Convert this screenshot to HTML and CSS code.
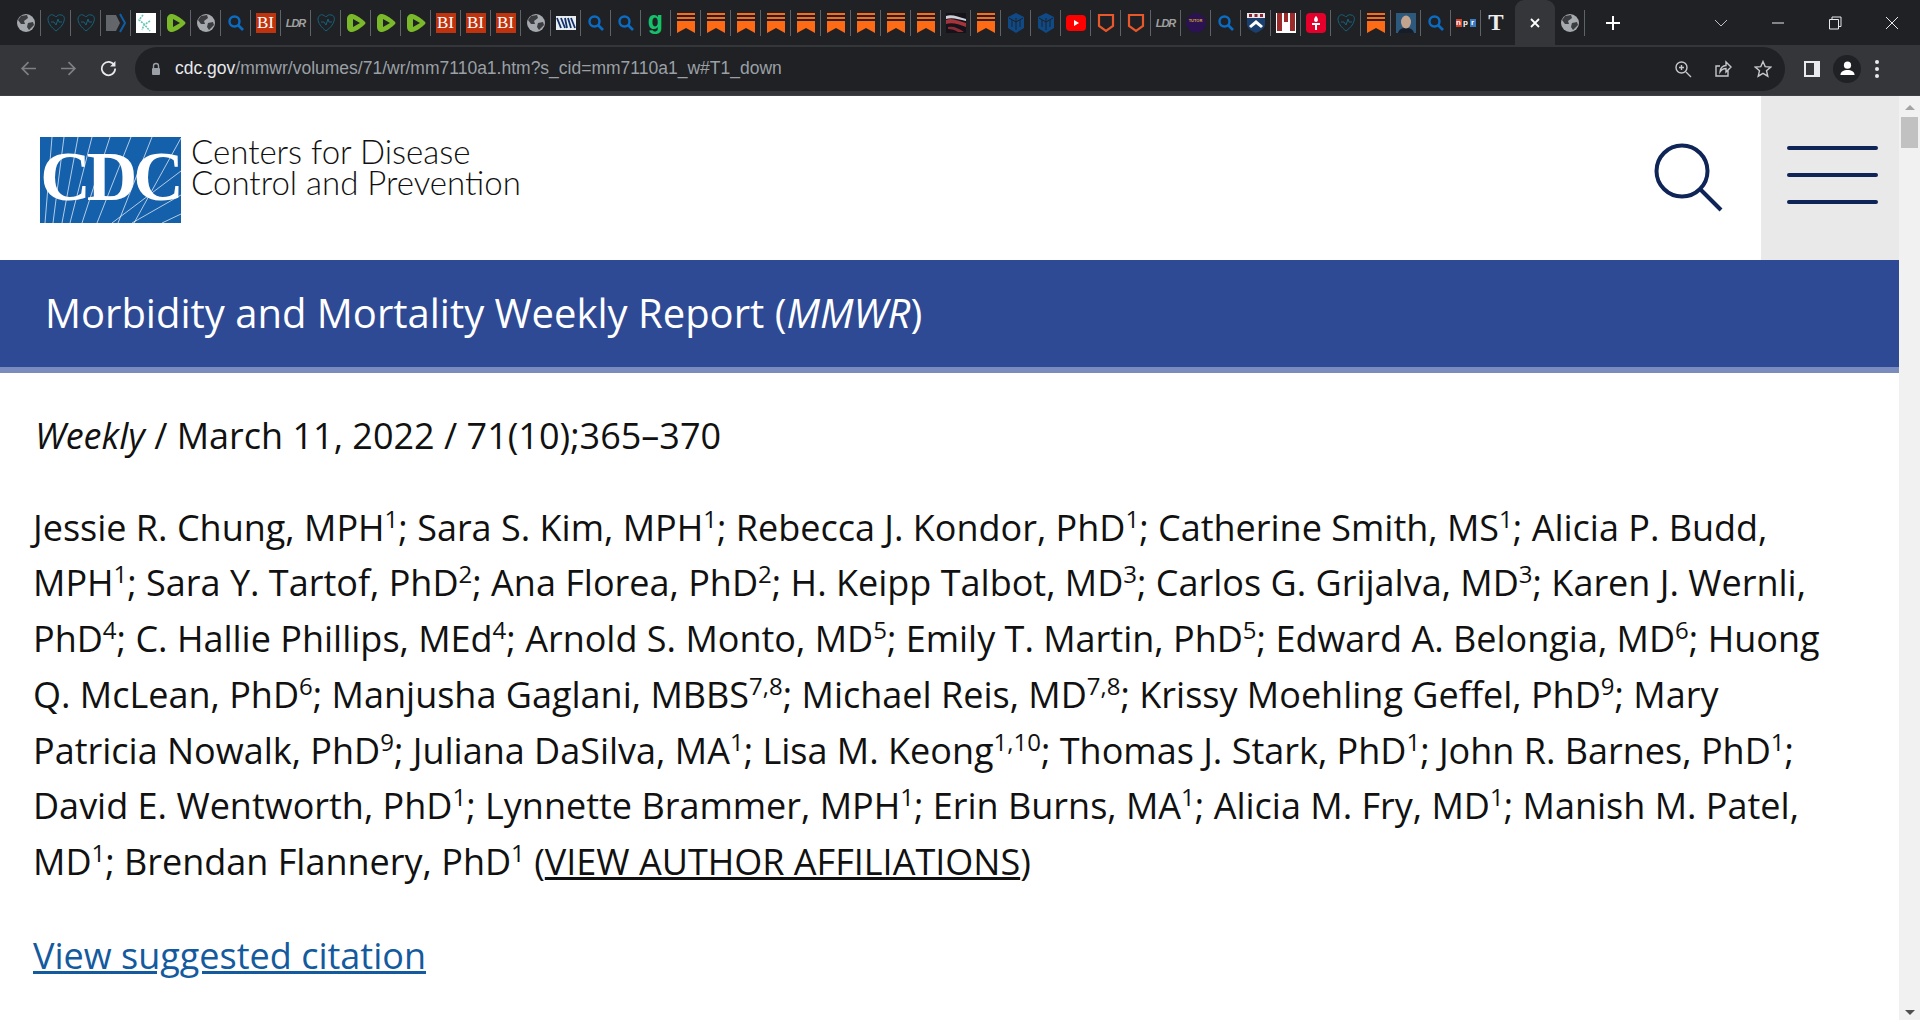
FILE: index.html
```html
<!DOCTYPE html>
<html lang="en">
<head>
  <meta charset="UTF-8">
  <meta name="viewport" content="width=device-width, initial-scale=1.0">
  <title>Morbidity and Mortality Weekly Report</title>
  <link rel="stylesheet" href="styles.css">
</head>
<body>
  <svg class="defs" width="0" height="0">
    <symbol id="globe" viewBox="0 0 20 20">
      <circle cx="10" cy="10" r="9" fill="#a6a9ad"/>
      <path d="M5 3 L11 2 L12 5 L8 8 L9 11 L5 11 L2 7 Z M12 10 L17 9 L18 12 L13 17 L11 14 Z" fill="#3a3c40"/>
    </symbol>
    <symbol id="heart" viewBox="0 0 20 20">
      <path d="M10 18 C5 14 2 10 2 6 C2 3 5 1 7 2 C9 3 10 4 10 4 C11 3 13 1 15 2 C18 2 19 5 18 8 C17 12 14 15 10 18 Z M5 9 L8 9 L10 12 L12 6 L13 9 L16 9" fill="none" stroke="#14617c" stroke-width="1"/>
    </symbol>
    <symbol id="play" viewBox="0 0 20 20">
      <path d="M6 1 C3 1 1 3 1 6 L1 14 C1 17 3 19 6 19 C9 19 15 15 18 12 C20 10.500 20 9.500 18 8 C15 5 9 1 6 1 Z" fill="#7ab929"/>
      <path d="M7 6 L14 10 L7 14 Z" fill="#202124"/>
    </symbol>
    <symbol id="search" viewBox="0 0 20 20">
      <circle cx="8.500" cy="8.500" r="5" fill="none" stroke="#0a6cc4" stroke-width="2.400"/>
      <path d="M12 12 L17 17" stroke="#0a6cc4" stroke-width="2.600"/>
    </symbol>
    <symbol id="bookmark" viewBox="0 0 20 20">
      <path d="M1 0 H19 V2 H1 Z M1 4 H19 V6 H1 Z M1 8 H19 V20 L10 15 L1 20 Z" fill="#ff6a14"/>
    </symbol>
    <symbol id="hex" viewBox="0 0 20 20">
      <path d="M10 0 L18 4 V15 L10 20 L2 15 V4 Z" fill="#0f4a86"/>
      <path d="M6 7 V14 M10 5 V17 M14 7 V14 M3 5 L10 9 L17 5" stroke="#202124" stroke-width="1" fill="none"/>
    </symbol>
    <symbol id="youtube" viewBox="0 0 20 20">
      <rect x="0" y="2" width="20" height="16" rx="4" fill="#f00"/>
      <path d="M8 7 L13 10 L8 13 Z" fill="#fff"/>
    </symbol>
    <symbol id="shield" viewBox="0 0 20 20">
      <path d="M3 2 H17 V13 L10 18 L3 13 Z" fill="none" stroke="#e8582a" stroke-width="2.200"/>
    </symbol>
    <symbol id="chevrons" viewBox="0 0 20 20">
      <path d="M0 2 H10 L14 10 L10 18 H0 Z" fill="#63666b"/>
      <path d="M14 1 L19 10 L14 19" fill="none" stroke="#0c5ea8" stroke-width="2"/>
    </symbol>
    <symbol id="crossing" viewBox="0 0 20 20">
      <rect width="20" height="20" fill="#fff"/>
      <path d="M7 2 L3 7 L8 11 L14 18 M14 8 L8 12 L6 17" fill="none" stroke="#62c5b5" stroke-width="1.600" stroke-dasharray="2 1"/>
    </symbol>
    <symbol id="flag" viewBox="0 0 20 20">
      <rect width="20" height="20" fill="#16121a"/>
      <path d="M0 7 C6 4 12 8 20 10 V14 C12 11 6 9 0 11 Z" fill="#a5343c"/>
      <path d="M0 3 C6 1 12 4 20 6 V8 C12 6 6 4 0 6 Z" fill="#ccd0d8"/>
      <path d="M2 14 C8 13 12 15 18 19 H12 C9 17 6 16 2 16 Z" fill="#8a2a34"/>
    </symbol>
    <symbol id="crest" viewBox="0 0 20 20">
      <path d="M1 0 H19 V11 C19 16 14 18 10 20 C6 18 1 16 1 11 Z" fill="#19406f"/>
      <path d="M1 0 H19 V5 H1 Z" fill="#e8e8e8"/>
      <path d="M3 1 H6 V4 H3 Z M8.500 1 H11.500 V4 H8.500 Z M14 1 H17 V4 H14 Z" fill="#8a2231"/>
      <path d="M3 13 L10 7 L17 13 L15 15 L10 11 L5 15 Z" fill="#fff"/>
    </symbol>
    <symbol id="stripes" viewBox="0 0 20 20">
      <rect width="20" height="20" fill="#fff"/>
      <path d="M1 0 H6 V18 H1 Z M8 0 H12 V9 H8 Z M14 0 H19 V18 H14 Z" fill="#9b2a2a"/>
    </symbol>
    <symbol id="torch" viewBox="0 0 20 20">
      <rect width="20" height="20" rx="4" fill="#e4002b"/>
      <path d="M10 3 C13 6 12 9 10 9 C8 9 7 6 10 3 Z M6 10 H14 V12 H11 V17 H9 V12 H6 Z" fill="#fff"/>
    </symbol>
    <symbol id="portrait" viewBox="0 0 20 20">
      <rect width="20" height="20" fill="#2d5a7c"/>
      <path d="M2 20 C3 16 6 15 10 15 C14 15 17 16 18 20 Z" fill="#161c28"/>
      <ellipse cx="10" cy="9" rx="5" ry="6.500" fill="#c2a48f"/>
    </symbol>
    <symbol id="wave" viewBox="0 0 20 20">
      <rect y="3" width="20" height="14" fill="#e8edf2"/>
      <path d="M1 5 L5 15 M5 5 L9 15 M9 5 L11 15 M12 5 L15 15 M15 5 L19 15" stroke="#12306a" stroke-width="1.800"/>
    </symbol>
  </svg>

  <!-- Browser tabs -->
  <div class="tabstrip">
    <div class="tab"><svg class="fav"><use href="#globe"/></svg></div>
    <div class="tab"><svg class="fav"><use href="#heart"/></svg></div>
    <div class="tab"><svg class="fav"><use href="#heart"/></svg></div>
    <div class="tab"><svg class="fav"><use href="#chevrons"/></svg></div>
    <div class="tab"><svg class="fav"><use href="#crossing"/></svg></div>
    <div class="tab"><svg class="fav"><use href="#play"/></svg></div>
    <div class="tab"><svg class="fav"><use href="#globe"/></svg></div>
    <div class="tab"><svg class="fav"><use href="#search"/></svg></div>
    <div class="tab"><span class="bi">BI</span></div>
    <div class="tab"><span class="ldr">LDR</span></div>
    <div class="tab"><svg class="fav"><use href="#heart"/></svg></div>
    <div class="tab"><svg class="fav"><use href="#play"/></svg></div>
    <div class="tab"><svg class="fav"><use href="#play"/></svg></div>
    <div class="tab"><svg class="fav"><use href="#play"/></svg></div>
    <div class="tab"><span class="bi">BI</span></div>
    <div class="tab"><span class="bi">BI</span></div>
    <div class="tab"><span class="bi">BI</span></div>
    <div class="tab"><svg class="fav"><use href="#globe"/></svg></div>
    <div class="tab"><svg class="fav"><use href="#wave"/></svg></div>
    <div class="tab"><svg class="fav"><use href="#search"/></svg></div>
    <div class="tab"><svg class="fav"><use href="#search"/></svg></div>
    <div class="tab"><span class="gram">g</span></div>
    <div class="tab"><svg class="fav"><use href="#bookmark"/></svg></div>
    <div class="tab"><svg class="fav"><use href="#bookmark"/></svg></div>
    <div class="tab"><svg class="fav"><use href="#bookmark"/></svg></div>
    <div class="tab"><svg class="fav"><use href="#bookmark"/></svg></div>
    <div class="tab"><svg class="fav"><use href="#bookmark"/></svg></div>
    <div class="tab"><svg class="fav"><use href="#bookmark"/></svg></div>
    <div class="tab"><svg class="fav"><use href="#bookmark"/></svg></div>
    <div class="tab"><svg class="fav"><use href="#bookmark"/></svg></div>
    <div class="tab"><svg class="fav"><use href="#bookmark"/></svg></div>
    <div class="tab"><svg class="fav"><use href="#flag"/></svg></div>
    <div class="tab"><svg class="fav"><use href="#bookmark"/></svg></div>
    <div class="tab"><svg class="fav"><use href="#hex"/></svg></div>
    <div class="tab"><svg class="fav"><use href="#hex"/></svg></div>
    <div class="tab"><svg class="fav"><use href="#youtube"/></svg></div>
    <div class="tab"><svg class="fav"><use href="#shield"/></svg></div>
    <div class="tab"><svg class="fav"><use href="#shield"/></svg></div>
    <div class="tab"><span class="ldr">LDR</span></div>
    <div class="tab"><span class="tutor">TUTOR</span></div>
    <div class="tab"><svg class="fav"><use href="#search"/></svg></div>
    <div class="tab"><svg class="fav"><use href="#crest"/></svg></div>
    <div class="tab"><svg class="fav"><use href="#stripes"/></svg></div>
    <div class="tab"><svg class="fav"><use href="#torch"/></svg></div>
    <div class="tab"><svg class="fav"><use href="#heart"/></svg></div>
    <div class="tab"><svg class="fav"><use href="#bookmark"/></svg></div>
    <div class="tab"><svg class="fav"><use href="#portrait"/></svg></div>
    <div class="tab"><svg class="fav"><use href="#search"/></svg></div>
    <div class="tab"><span class="npr"><b>n</b><b>p</b><b>r</b></span></div>
    <div class="tab tab-last"><span class="nyt">T</span></div>
    <div class="tab-active">
      <svg class="tab-close" viewBox="0 0 12 12"><path d="M2 2 L10 10 M10 2 L2 10"/></svg>
    </div>
    <div class="tab tab-after"><svg class="fav"><use href="#globe"/></svg></div>
    <svg class="new-tab" viewBox="0 0 16 16"><path d="M8 1 V15 M1 8 H15"/></svg>
    <div class="window-btns">
      <svg class="win-icon win-down" viewBox="0 0 14 14"><path d="M1 4 L7 10 L13 4"/></svg>
      <svg class="win-icon" viewBox="0 0 14 14"><path d="M1 7 H13"/></svg>
      <svg class="win-icon" viewBox="0 0 14 14"><path d="M1.500 3.500 H10.500 V13 H1.500 Z M4 3.500 V1 H13 V10.500 H10.500"/></svg>
      <svg class="win-icon" viewBox="0 0 14 14"><path d="M1 1 L13 13 M13 1 L1 13"/></svg>
    </div>
  </div>

  <!-- Address bar -->
  <div class="toolbar">
    <svg class="nav-icon nav-off" viewBox="0 0 16 16"><path d="M15 8 H2 M8 2 L2 8 L8 14"/></svg>
    <svg class="nav-icon nav-off" viewBox="0 0 16 16"><path d="M1 8 H14 M8 2 L14 8 L8 14"/></svg>
    <svg class="nav-icon" viewBox="0 0 16 16"><path d="M13.500 5 A6.300 6.300 0 1 0 14.300 8"/><path class="solid" d="M14.500 1 V6 H9.500 Z"/></svg>
    <div class="omnibox">
      <svg class="lock" viewBox="0 0 12 14"><path d="M3.500 6 V4 A2.500 2.500 0 0 1 8.500 4 V6" fill="none" stroke="#9aa0a6" stroke-width="1.400"/><rect x="2" y="6" width="8" height="7" rx="1" fill="#9aa0a6"/></svg>
      <span class="url"><span class="url-host">cdc.gov</span>/mmwr/volumes/71/wr/mm7110a1.htm?s_cid=mm7110a1_w#T1_down</span>
      <div class="omni-actions">
        <svg class="omni-icon" viewBox="0 0 18 18"><circle cx="7.500" cy="7.500" r="5.500"/><path d="M12 12 L17 17 M5 7.500 H10 M7.500 5 V10"/></svg>
        <svg class="omni-icon" viewBox="0 0 18 18"><path d="M14 10 V16 H2 V6 H6 M6 12 C6 8 9 5.500 12 5.500 V2 L17 7 L12 12 V8.500 C10 8.500 7.500 9.500 6 12 Z"/></svg>
        <svg class="omni-icon" viewBox="0 0 18 18"><path d="M9 1.500 L11.200 6.600 L16.700 7.100 L12.500 10.700 L13.800 16.200 L9 13.300 L4.200 16.200 L5.500 10.700 L1.300 7.100 L6.800 6.600 Z"/></svg>
      </div>
    </div>
    <svg class="side-panel" viewBox="0 0 18 18"><path fill-rule="evenodd" d="M1 1 H17 V17 H1 Z M3 3 V15 H11 V3 Z"/></svg>
    <div class="avatar">
      <svg viewBox="0 0 18 18"><circle cx="9" cy="5.500" r="3.800"/><path d="M1.500 16 C1.500 12 5 10.500 9 10.500 C13 10.500 16.500 12 16.500 16 Z"/></svg>
    </div>
    <div class="kebab"><i></i><i></i><i></i></div>
  </div>

  <div class="viewport">
    <div class="page">
      <header class="site-header">
        <div class="logo">
          <svg class="logo-mark" viewBox="0 0 141 86">
            <rect width="141" height="86" fill="#1560ab"/>
            <path class="rays" d="M12 0 L5 86 M24 0 L13 86 M38 0 L22 86 M52 0 L30 86 M70 0 L42 86 M91 0 L57 86 M112 0 L78 86 M141 1 L94 86 M141 34 L72 86 M141 58 L92 86 M141 77 L122 86"/>
            <text class="logo-letters" x="70" y="63" text-anchor="middle">CDC</text>
          </svg>
          <div class="logo-text">Centers for Disease<br>Control and Prevention</div>
        </div>
        <div class="header-tools">
          <div class="search-btn">
            <svg viewBox="0 0 70 70"><circle cx="28" cy="28" r="25.500"/><path d="M47 47 L67 67"/></svg>
          </div>
          <div class="menu-btn"><i></i><i></i><i></i></div>
        </div>
      </header>

      <div class="banner">Morbidity and Mortality Weekly Report (<em>MMWR</em>)</div>

      <main class="article">
        <p class="dateline"><em>Weekly</em> / March 11, 2022 / 71(10);365–370</p>
        <p class="authors">Jessie R. Chung, MPH<sup>1</sup>; Sara S. Kim, MPH<sup>1</sup>; Rebecca J. Kondor, PhD<sup>1</sup>; Catherine Smith, MS<sup>1</sup>; Alicia P. Budd,<br>
        MPH<sup>1</sup>; Sara Y. Tartof, PhD<sup>2</sup>; Ana Florea, PhD<sup>2</sup>; H. Keipp Talbot, MD<sup>3</sup>; Carlos G. Grijalva, MD<sup>3</sup>; Karen J. Wernli,<br>
        PhD<sup>4</sup>; C. Hallie Phillips, MEd<sup>4</sup>; Arnold S. Monto, MD<sup>5</sup>; Emily T. Martin, PhD<sup>5</sup>; Edward A. Belongia, MD<sup>6</sup>; Huong<br>
        Q. McLean, PhD<sup>6</sup>; Manjusha Gaglani, MBBS<sup>7,8</sup>; Michael Reis, MD<sup>7,8</sup>; Krissy Moehling Geffel, PhD<sup>9</sup>; Mary<br>
        Patricia Nowalk, PhD<sup>9</sup>; Juliana DaSilva, MA<sup>1</sup>; Lisa M. Keong<sup>1,10</sup>; Thomas J. Stark, PhD<sup>1</sup>; John R. Barnes, PhD<sup>1</sup>;<br>
        David E. Wentworth, PhD<sup>1</sup>; Lynnette Brammer, MPH<sup>1</sup>; Erin Burns, MA<sup>1</sup>; Alicia M. Fry, MD<sup>1</sup>; Manish M. Patel,<br>
        MD<sup>1</sup>; Brendan Flannery, PhD<sup>1</sup> (<a class="plain-link" href="#">VIEW AUTHOR AFFILIATIONS</a>)</p>
        <p class="citation"><a href="#">View suggested citation</a></p>
      </main>
    </div>

    <div class="scrollbar">
      <span class="arrow-up"></span>
      <div class="thumb"></div>
      <span class="arrow-down"></span>
    </div>
  </div>
</body>
</html>
```

FILE: styles.css
```css
html, body {
  margin: 0;
  padding: 0;
  height: 1020px;
  overflow: hidden;
}
body {
  font-family: "Open Sans", sans-serif;
  background-color: #fff;
  color: #111;
}
.defs {
  display: block;
  height: 0;
}

/* tabs */
.tabstrip {
  display: flex;
  align-items: center;
  height: 45px;
  padding-left: 11px;
  background-color: #202124;
}
.tab {
  flex: none;
  box-sizing: border-box;
  width: 30px;
  height: 26px;
  display: flex;
  align-items: center;
  justify-content: center;
  border-right: 1px solid #5f6368;
}
.tab-last {
  border-right: none;
}
.tab-after {
  margin-left: 0;
}
.fav {
  width: 20px;
  height: 20px;
}
.bi {
  width: 20px;
  height: 20px;
  background-color: #c0330f;
  color: #fff;
  font-family: "Liberation Serif", serif;
  font-size: 17px;
  line-height: 20px;
  text-align: center;
}
.ldr {
  font-family: "Liberation Sans", sans-serif;
  font-weight: bold;
  font-style: italic;
  font-size: 11px;
  letter-spacing: -1px;
  color: #a0a0a0;
}
.gram {
  font-family: "Liberation Sans", sans-serif;
  font-weight: bold;
  font-size: 25px;
  line-height: 20px;
  margin-top: -5px;
  color: #15c26b;
}
.tutor {
  width: 20px;
  height: 20px;
  border-radius: 50%;
  background-color: #2a1350;
  color: #d9a53b;
  font-family: "Liberation Sans", sans-serif;
  font-size: 4px;
  font-weight: bold;
  line-height: 16px;
  text-align: center;
}
.npr {
  display: flex;
  gap: 1px;
}
.npr b {
  width: 6px;
  height: 8px;
  font-family: "Liberation Sans", sans-serif;
  font-size: 8px;
  line-height: 8px;
  color: #fff;
  text-align: center;
}
.npr b:nth-child(1) { background-color: #d9432a; }
.npr b:nth-child(2) { background-color: #222; }
.npr b:nth-child(3) { background-color: #3a78c2; }
.nyt {
  font-family: "Liberation Serif", serif;
  font-weight: bold;
  font-size: 23px;
  line-height: 20px;
  color: #eee;
}
.tab-active {
  flex: none;
  align-self: flex-end;
  width: 40px;
  height: 45px;
  margin-left: 4px;
  display: flex;
  align-items: center;
  justify-content: center;
  background-color: #35363a;
  border-radius: 9px 9px 0 0;
}
.tab-close {
  width: 12px;
  height: 12px;
  fill: none;
  stroke: #fff;
  stroke-width: 1.800;
}
.new-tab {
  width: 16px;
  height: 16px;
  margin-left: 20px;
  fill: none;
  stroke: #fff;
  stroke-width: 2;
}
.window-btns {
  margin-left: auto;
  display: flex;
  align-items: center;
  gap: 43px;
  padding-right: 21px;
}
.win-icon {
  width: 14px;
  height: 14px;
  fill: none;
  stroke: #e8eaed;
  stroke-width: 1;
}
.win-down {
  margin-right: 0;
  stroke: #bdc1c6;
}

/* address bar */
.toolbar {
  display: flex;
  align-items: center;
  height: 51px;
  box-sizing: border-box;
  padding: 0 0 3px 20px;
  background-color: #35363a;
  border-bottom: 1px solid #3f4044;
}
.nav-icon {
  flex: none;
  width: 17px;
  height: 17px;
  margin-right: 23px;
  fill: none;
  stroke: #e8eaed;
  stroke-width: 1.600;
}
.nav-off {
  stroke: #7d8084;
}
.nav-icon .solid {
  fill: #e8eaed;
  stroke: none;
}
.omnibox {
  flex: none;
  display: flex;
  align-items: center;
  box-sizing: border-box;
  width: 1650px;
  height: 44px;
  margin-left: -5px;
  padding-left: 15px;
  background-color: #202124;
  border-radius: 22px;
}
.lock {
  width: 12px;
  height: 14px;
  margin-right: 13px;
}
.url {
  font-family: "Liberation Sans", sans-serif;
  font-size: 17.500px;
  color: #9aa0a6;
}
.url-host {
  color: #e8eaed;
}
.omni-actions {
  margin-left: auto;
  display: flex;
  gap: 22px;
  padding-right: 13px;
}
.omni-icon {
  width: 18px;
  height: 18px;
  fill: none;
  stroke: #c4c7cb;
  stroke-width: 1.400;
}
.side-panel {
  flex: none;
  width: 18px;
  height: 18px;
  margin-left: 18px;
  fill: #e8eaed;
}
.avatar {
  flex: none;
  width: 28px;
  height: 28px;
  margin-left: 12px;
  display: flex;
  align-items: center;
  justify-content: center;
  background-color: #202124;
  border-radius: 50%;
}
.avatar svg {
  width: 17px;
  height: 17px;
  fill: #fff;
}
.kebab {
  flex: none;
  margin-left: 14px;
  display: flex;
  flex-direction: column;
  gap: 3px;
}
.kebab i {
  width: 4px;
  height: 4px;
  background-color: #e8eaed;
  border-radius: 50%;
}

/* page */
.viewport {
  display: flex;
  height: 924px;
}
.page {
  flex: 1;
  min-width: 0;
  overflow: hidden;
}
.site-header {
  display: flex;
  justify-content: space-between;
  height: 164px;
}
.logo {
  display: flex;
  align-items: flex-start;
  padding: 41px 0 0 40px;
}
.logo-mark {
  width: 141px;
  height: 86px;
}
.rays {
  stroke: #fff;
  stroke-width: 0.800;
  fill: none;
  opacity: 0.85;
}
.logo-letters {
  font-family: "Liberation Serif", serif;
  font-weight: bold;
  font-size: 70px;
  letter-spacing: -4px;
  fill: #fff;
}
.logo-text {
  margin: -1px 0 0 10px;
  font-family: Lato, sans-serif;
  font-weight: 300;
  font-size: 33px;
  line-height: 31px;
  color: #111;
}
.header-tools {
  display: flex;
}
.search-btn {
  width: 70px;
  padding: 47px 37px 0 0;
}
.search-btn svg {
  width: 70px;
  height: 70px;
  fill: none;
  stroke: #0f2457;
  stroke-width: 4;
}
.menu-btn {
  width: 138px;
  box-sizing: border-box;
  padding: 50px 0 0 26px;
  display: flex;
  flex-direction: column;
  gap: 23px;
  background-color: #e9e9e9;
}
.menu-btn i {
  width: 91px;
  height: 4px;
  background-color: #0f2457;
  border-radius: 2px;
}
.banner {
  height: 107px;
  box-sizing: border-box;
  padding-left: 45px;
  font-size: 40px;
  line-height: 105px;
  color: #fff;
  background-color: #2e4a94;
  border-bottom: 6px solid #7a8bbd;
  height: 113px;
}
.article {
  padding: 0 0 0 33px;
}
.article p {
  margin: 0;
  font-size: 36px;
  line-height: 55.700px;
}
.article .dateline {
  padding: 35px 0 0 2px;
}
.article .authors {
  margin-top: 36px;
}
.article .citation {
  margin-top: 38px;
}
.article sup {
  font-size: 24px;
  line-height: 0;
}
.plain-link {
  color: #111;
}
.citation a {
  color: #135a9e;
}

/* scrollbar */
.scrollbar {
  flex: none;
  width: 21px;
  display: flex;
  flex-direction: column;
  align-items: center;
  background-color: #f1f1f1;
}
.arrow-up {
  margin-top: 9px;
  border: 5px solid transparent;
  border-top: none;
  border-bottom: 5px solid #a3a3a3;
}
.thumb {
  width: 17px;
  height: 31px;
  margin-top: 7px;
  background-color: #c1c1c1;
}
.arrow-down {
  margin-top: auto;
  margin-bottom: 5px;
  border: 5px solid transparent;
  border-bottom: none;
  border-top: 5px solid #505050;
}
```
